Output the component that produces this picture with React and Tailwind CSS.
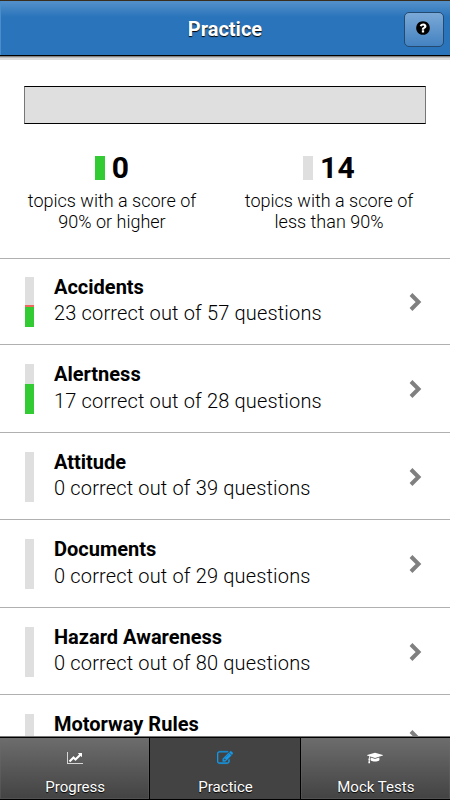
import React from 'react';

const topics = [
  { name: 'Accidents', correct: 23, total: 57, seen: 43, green: 40 },
  { name: 'Alertness', correct: 17, total: 28, seen: 60, green: 60 },
  { name: 'Attitude', correct: 0, total: 39, seen: 0, green: 0 },
  { name: 'Documents', correct: 0, total: 29, seen: 0, green: 0 },
  { name: 'Hazard Awareness', correct: 0, total: 80, seen: 0, green: 0 },
  { name: 'Motorway Rules', correct: 0, total: 75, seen: 0, green: 0 },
];

function QuestionIcon() {
  return (
    <svg className="w-4 h-4" viewBox="0 0 1792 1792">
      <circle cx="896" cy="896" r="700" fill="white" />
      <path d="M1024 1376v-192q0-14-9-23t-23-9h-192q-14 0-23 9t-9 23v192q0 14 9 23t23 9h192q14 0 23-9t9-23zm256-672q0-88-55.5-163t-138.5-116-170-41q-243 0-371 213-15 24 8 42l132 100q7 6 19 6 16 0 25-12 53-68 86-92 34-24 86-24 48 0 85.5 26t37.5 59q0 38-20 61t-68 45q-63 28-115.5 86.5t-52.5 125.5v36q0 14 9 23t23 9h192q14 0 23-9t9-23q0-19 21.5-49.5t54.5-49.5q32-18 49-28.5t46-35 44.5-48 28-60.5 12.5-81zm384 192q0 209-103 385.5t-279.5 279.5-385.5 103-385.5-103-279.5-279.5-103-385.5 103-385.5 279.5-279.5 385.5-103 385.5 103 279.5 279.5 103 385.5z" />
    </svg>
  );
}

function ChartIcon() {
  return (
    <svg className="w-4 h-3.5" viewBox="0 0 2048 1792" fill="currentColor">
      <path opacity="0.75" d="M2048 1536v128h-2048v-1536h128v1408z" />
      <path d="M1920 288v435q0 21-19.5 29.5t-35.5-7.5l-121-121-633 633q-10 10-23 10t-23-10l-233-233-416 416-192-192 585-585q10-10 23-10t23 10l233 233 464-464-121-121q-16-16-7.5-35.5t29.5-19.5h435q14 0 23 9t9 23z" />
    </svg>
  );
}

function PencilIcon() {
  return (
    <svg className="w-4 h-4" viewBox="0 0 1792 1792" fill="currentColor" stroke="currentColor" strokeWidth="40">
      <path d="M888 1184l116-116-152-152-116 116v56h96v96h56zm440-720q-16-16-33 1l-350 350q-17 17-1 33t33-1l350-350q17-17 1-33zm80 594v190q0 119-84.5 203.5t-203.5 84.5h-832q-119 0-203.5-84.5t-84.5-203.5v-832q0-119 84.5-203.5t203.5-84.5h832q63 0 117 25 15 7 18 23 3 17-9 29l-49 49q-14 14-32 8-23-6-45-6h-832q-66 0-113 47t-47 113v832q0 66 47 113t113 47h832q66 0 113-47t47-113v-126q0-13 9-22l64-64q15-15 35-7t20 29zm-96-738l288 288-672 672h-288v-288zm444 132l-92 92-288-288 92-92q28-28 68-28t68 28l152 152q28 28 28 68t-28 68z" />
    </svg>
  );
}

function CapIcon() {
  return (
    <svg className="w-4 h-3.5" viewBox="0 0 2304 1792" fill="currentColor">
      <path d="M1774 836l18 316q4 69-82 128t-235 93.5-323 34.5-323-34.5-235-93.5-82-128l18-316 574 181q22 7 48 7t48-7zm530-324q0 23-22 31l-1120 352q-4 1-10 1t-10-1l-652-206q-43 34-71 111.5t-34 178.5q63 36 63 109 0 69-58 107l58 433q2 14-8 25-9 11-24 11h-192q-15 0-24-11-10-11-8-25l58-433q-58-38-58-107 0-73 65-111 11-207 98-330l-333-104q-22-8-22-31t22-31l1120-352q4-1 10-1t10 1l1120 352q22 8 22 31z" />
    </svg>
  );
}

function Header() {
  return (
    <header className="relative z-10 h-14 shrink-0 grid grid-cols-[1fr_auto_1fr] items-center border-t border-t-[#3a2d1d] border-b border-b-black bg-linear-to-b from-[#518fc9] from-2% via-[#2974bb] via-30% to-[#2974bb] shadow-[inset_1px_0_0_#4a8dcb,0_1px_0_#858585,0_2px_0_#bdbdbd,0_4px_0_#dedede]">
      <span />
      <h1 className="mt-0.5 text-xl leading-6 font-bold text-white [text-shadow:0_1px_1px_#000]">Practice</h1>
      <button className="justify-self-end mr-1.5 mt-0.5 w-10 h-[35px] flex items-center justify-center rounded-[5px] border border-[#254a70] bg-linear-to-b from-[#7ba9d7] to-[#4382c1]">
        <span className="-ml-0.5 -mt-0.5"><QuestionIcon /></span>
      </button>
    </header>
  );
}

function Score({ count, color, children }) {
  return (
    <div className="w-[217px] shrink-0 flex flex-col items-center">
      <div className="flex items-center gap-[7px] h-9 -ml-px">
        <span className={`w-2.5 h-6 ${color}`} />
        <span className="text-3xl font-bold tracking-[0.3px]">{count}</span>
      </div>
      <p className="mt-1 -ml-px w-44 text-center text-lg leading-[21px] font-light">{children}</p>
    </div>
  );
}

function Topic({ topic }) {
  return (
    <li className="h-[87.5px] shrink-0 flex border-b border-[#b0b0b0] pt-[19px] first:h-[86px] first:pt-[17.5px] pl-[25px] pr-7">
      <div className="relative w-[9px] h-[50px] bg-[#dfdfdf]">
        <div className="absolute bottom-0 w-full bg-[#f0685a]" style={{ height: `${topic.seen}%` }} />
        <div className="absolute bottom-0 w-full bg-[#33cb33]" style={{ height: `${topic.green}%` }} />
      </div>
      <div className="ml-5 -mt-[3px] flex-1 text-xl leading-[26.5px]">
        <h2 className="font-bold">{topic.name}</h2>
        <p className="font-light tracking-[0.16px]">{topic.correct} correct out of {topic.total} questions</p>
      </div>
      <svg className="mt-[15px] w-3.5 h-5" viewBox="0 0 14 20" fill="none" stroke="#808080" strokeWidth="4">
        <path d="M3 2.5l7.5 7.5-7.5 7.5" />
      </svg>
    </li>
  );
}

function Tab({ icon, label, active }) {
  return (
    <button className={`flex-1 flex flex-col items-center border-t border-b border-black ${active ? 'border-x bg-[#434343]' : 'bg-linear-to-b from-[#6d6d6d] to-[#434343] shadow-[inset_0_0_0_1px_#6c6c6c55]'}`}>
      <span className={`mt-3 h-4 flex items-center ${active ? 'text-[#149ae8]' : 'text-white'}`}>{icon}</span>
      <span className="ml-px mt-[11px] text-[15px] leading-5 text-white [text-shadow:0_1px_1px_#000]">{label}</span>
    </button>
  );
}

export default function App() {
  return (
    <div className="w-[450px] h-[800px] flex flex-col overflow-hidden bg-white text-black font-['Roboto',sans-serif]">
      <Header />
      <main className="flex-1 min-h-0 overflow-hidden flex flex-col">
        <section className="h-[202px] shrink-0 pt-[30px] px-6">
          <div className="w-[402px] h-[38px] border border-black border-x-[#777] bg-[#dfdfdf]" />
          <div className="mt-[26px] -ml-5 flex">
            <Score count={0} color="bg-[#33cb33]">topics with a score of 90% or higher</Score>
            <Score count={14} color="bg-[#dfdfdf]">topics with a score of less than 90%</Score>
          </div>
        </section>
        <ul className="flex flex-col border-t border-[#b0b0b0]">
          {topics.map((topic) => (
            <Topic key={topic.name} topic={topic} />
          ))}
        </ul>
      </main>
      <nav className="relative z-10 h-16 shrink-0 flex border-t border-[#777]">
        <Tab icon={<ChartIcon />} label="Progress" />
        <Tab icon={<PencilIcon />} label="Practice" active />
        <Tab icon={<CapIcon />} label="Mock Tests" />
      </nav>
    </div>
  );
}
